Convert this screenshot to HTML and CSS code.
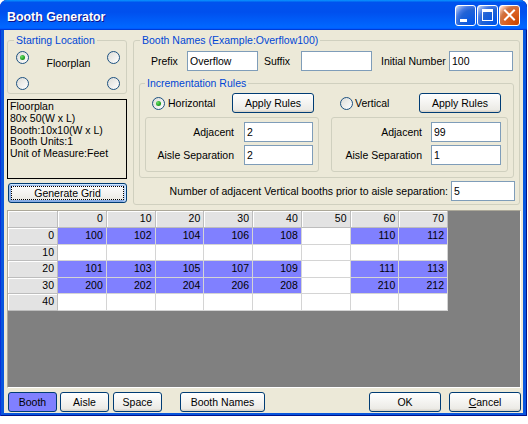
FILE: index.html
```html
<!DOCTYPE html>
<html>
<head>
<meta charset="utf-8">
<title>Booth Generator</title>
<link rel="stylesheet" href="styles.css">
</head>
<body>
<div class="window">
  <div class="titlebar">
    <span class="title">Booth Generator</span>
    <div class="tbtns">
      <span class="tbtn blue"><svg width="19" height="19" viewBox="0 0 19 19"><rect x="4" y="13" width="7" height="3" fill="#fff"/></svg></span>
      <span class="tbtn blue"><svg width="19" height="19" viewBox="0 0 19 19"><path d="M4 3h11v12H4z M5 6v8h9V6z" fill="#fff" fill-rule="evenodd"/></svg></span>
      <span class="tbtn red"><svg width="19" height="19" viewBox="0 0 19 19"><path d="M5 4.5l9 9M14 4.5l-9 9" stroke="#fff" stroke-width="2" stroke-linecap="square"/></svg></span>
    </div>
  </div>
  <div class="client">
    <div class="top">
      <div class="leftcol">
        <fieldset class="group start">
          <legend>Starting Location</legend>
          <div class="startgrid">
            <span class="radio checked"></span>
            <span class="fp">Floorplan</span>
            <span class="radio"></span>
            <span class="radio"></span>
            <span class="radio"></span>
          </div>
        </fieldset>
        <div class="info">Floorplan<br>80x 50(W x L)<br>Booth:10x10(W x L)<br>Booth Units:1<br>Unit of Measure:Feet</div>
        <button class="btn focus gen">Generate Grid</button>
      </div>
      <fieldset class="group names">
        <legend>Booth Names (Example:Overflow100)</legend>
        <div class="row1">
          <span class="lbl">Prefix</span>
          <div class="tb">Overflow</div>
          <span class="lbl suf">Suffix</span>
          <div class="tb"></div>
          <span class="lbl ini">Initial Number</span>
          <div class="tb">100</div>
        </div>
        <fieldset class="group inc">
          <legend>Incrementation Rules</legend>
          <div class="inccols">
            <div class="col cola">
              <div class="radrow">
                <span class="radio checked"></span>
                <span class="rlabel">Horizontal</span>
                <button class="btn apply">Apply Rules</button>
              </div>
              <div class="sub">
                <div class="frow"><span class="flabel">Adjacent</span><div class="tb">2</div></div>
                <div class="frow"><span class="flabel">Aisle Separation</span><div class="tb">2</div></div>
              </div>
            </div>
            <div class="col colb">
              <div class="radrow">
                <span class="radio"></span>
                <span class="rlabel">Vertical</span>
                <button class="btn apply">Apply Rules</button>
              </div>
              <div class="sub">
                <div class="frow"><span class="flabel">Adjacent</span><div class="tb">99</div></div>
                <div class="frow"><span class="flabel">Aisle Separation</span><div class="tb">1</div></div>
              </div>
            </div>
          </div>
        </fieldset>
        <div class="row3">
          <span class="ntext">Number of adjacent Vertical booths prior to aisle separation:</span>
          <div class="tb">5</div>
        </div>
      </fieldset>
    </div>
    <div class="gridarea">
      <div class="sheet">
        <div class="c h"></div><div class="c h">0</div><div class="c h">10</div><div class="c h">20</div><div class="c h">30</div><div class="c h">40</div><div class="c h">50</div><div class="c h">60</div><div class="c h">70</div>
        <div class="c h">0</div><div class="c b">100</div><div class="c b">102</div><div class="c b">104</div><div class="c b">106</div><div class="c b">108</div><div class="c"></div><div class="c b">110</div><div class="c b">112</div>
        <div class="c h">10</div><div class="c"></div><div class="c"></div><div class="c"></div><div class="c"></div><div class="c"></div><div class="c"></div><div class="c"></div><div class="c"></div>
        <div class="c h">20</div><div class="c b">101</div><div class="c b">103</div><div class="c b">105</div><div class="c b">107</div><div class="c b">109</div><div class="c"></div><div class="c b">111</div><div class="c b">113</div>
        <div class="c h">30</div><div class="c b">200</div><div class="c b">202</div><div class="c b">204</div><div class="c b">206</div><div class="c b">208</div><div class="c"></div><div class="c b">210</div><div class="c b">212</div>
        <div class="c h">40</div><div class="c"></div><div class="c"></div><div class="c"></div><div class="c"></div><div class="c"></div><div class="c"></div><div class="c"></div><div class="c"></div>
      </div>
    </div>
    <div class="bottombar">
      <button class="btn bb booth">Booth</button>
      <button class="btn bb aisle">Aisle</button>
      <button class="btn bb space">Space</button>
      <button class="btn names-btn">Booth Names</button>
      <button class="btn ok">OK</button>
      <button class="btn cancel"><span class="u">C</span>ancel</button>
    </div>
  </div>
</div>
</body>
</html>
```
FILE: styles.css
```css
* { box-sizing: border-box; }
body {
  margin: 0;
  background: #fff;
  font-family: "Liberation Sans", Arial, sans-serif;
  font-size: 10.5px;
  color: #000;
}
.window {
  width: 527px;
  height: 416px;
  background: #0855DD;
  border-radius: 7px 7px 0 0;
  display: flex;
  flex-direction: column;
  overflow: hidden;
  box-shadow: inset 1px 0 #0831D9, inset -1px 0 #00138C, inset 0 -1px #00138C;
}
.titlebar {
  height: 30px;
  flex: none;
  display: flex;
  align-items: center;
  padding: 0 7px 0 7px;
  background: linear-gradient(180deg, #0997ff, #0053ee 8%, #0050ee 40%, #0066ff 88%, #0066ff 93%, #005bff 95%, #003dd7 96%, #003dd7);
  border-radius: 7px 7px 0 0;
}
.title {
  color: #fff;
  font-weight: bold;
  font-size: 12.4px;
  padding-top: 3px;
  text-shadow: 1px 1px #0F1089;
}
.tbtns {
  margin-left: auto;
  display: flex;
  gap: 1px;
}
.tbtn {
  width: 21px;
  height: 21px;
  border: 1px solid #fff;
  border-radius: 3px;
  display: flex;
}
.tbtn.blue {
  background: radial-gradient(circle at 90% 90%, #0054e9 0%, #2263d5 55%, #4479e4 70%, #a3bbec 90%, #fff 100%);
}
.tbtn.red {
  background: radial-gradient(circle at 90% 90%, #cc4600 0%, #dc6527 55%, #cd7546 70%, #ffccb2 90%, #fff 100%);
}
.client {
  flex: 1;
  margin: 0 4px 4px;
  background: #ECE9D8;
  padding: 4px 2px 1px 3px;
  display: flex;
  flex-direction: column;
}
.top {
  display: flex;
  gap: 6px;
  height: 171px;
}
.leftcol {
  width: 120px;
  display: flex;
  flex-direction: column;
}
fieldset.group {
  margin: 0;
  padding: 0;
  border: 1px solid #D0D0BF;
  border-radius: 3px;
  min-width: 0;
}
fieldset.group > legend {
  padding: 0 2px;
  color: #0046D5;
  line-height: 13px;
  margin-left: 6px;
}
.start { height: 60px; }
.startgrid {
  display: grid;
  grid-template-columns: 13px 1fr 13px;
  grid-template-rows: 13px 13px;
  row-gap: 13px;
  padding: 4px 6px 0 8px;
}
.fp {
  grid-column: 2;
  grid-row: 1 / span 2;
  align-self: start;
  margin-top: 6px;
  line-height: 13px;
  text-align: center;
  padding-left: 1px;
}
.radio {
  width: 13px;
  height: 13px;
  border-radius: 50%;
  border: 1px solid #1C5180;
  background: linear-gradient(135deg, #DCDCD7, #fff);
  display: inline-flex;
  align-items: center;
  justify-content: center;
  flex: none;
}
.radio.checked::after {
  content: "";
  width: 5px;
  height: 5px;
  border-radius: 50%;
  background: radial-gradient(circle at 35% 35%, #6CE06C, #21A121 60%, #1A7E1A);
}
.info {
  margin-top: 5px;
  height: 80px;
  border: 1px solid #000;
  padding: 1px 0 0 2px;
  line-height: 11.75px;
  white-space: nowrap;
}
.btn {
  display: flex;
  align-items: center;
  justify-content: center;
  height: 20px;
  border: 1px solid #003C74;
  border-radius: 3px;
  background: linear-gradient(180deg, #fff, #ECEBE6 86%, #D6D0C5);
  font: inherit;
  color: #000;
  padding: 0;
  margin: 0;
  white-space: nowrap;
}
.btn.focus {
  box-shadow: inset -1px 1px #CEE7FF, inset 1px 2px #98B8EA, inset -2px 0 #BCD4F6, inset 1px -1px #89ADE4, inset 2px -2px #89ADE4;
  outline: 1px dotted #000;
  outline-offset: -4px;
}
.gen {
  margin-top: 4px;
  width: 119px;
  margin-left: 1px;
}
.names {
  width: 387px;
  height: 171px;
}
.row1 {
  display: grid;
  grid-template-columns: 36px 71px 43px 71px 77px 64px;
  align-items: center;
  padding-left: 17px;
  margin-top: 4px;
  height: 20px;
}
.lbl { white-space: nowrap; }
.lbl.suf { padding-left: 6px; }
.lbl.ini { padding-left: 9px; }
.tb {
  height: 20px;
  border: 1px solid #7F9DB9;
  background: #fff;
  padding: 0 2px;
  line-height: 18px;
  white-space: nowrap;
}
.inc {
  margin: 6px 0 0 5px !important;
  width: 375px;
  height: 101px;
}
fieldset.inc > legend { margin-left: 5px; }
.inccols {
  display: flex;
  padding-left: 5px;
}
.cola { width: 174px; }
.colb { width: 177px; margin-left: 12px; }
.radrow {
  display: flex;
  align-items: center;
  height: 20px;
  margin-top: 3px;
}
.cola .radrow .radio { margin-left: 7px; }
.colb .radrow .radio { margin-left: 9px; }
.cola .rlabel { margin-left: 3px; }
.colb .rlabel { margin-left: 2px; }
.apply {
  width: 82px;
  margin-left: auto;
}
.cola .apply { margin-right: 5px; }
.colb .apply { margin-right: 7px; }
.sub {
  margin-top: 4px;
  height: 55px;
  border: 1px solid #D0D0BF;
  border-radius: 3px;
  padding-top: 4px;
  display: flex;
  flex-direction: column;
  gap: 3px;
}
.cola .sub { padding-right: 5px; }
.colb .sub { padding-right: 6px; }
.frow {
  display: flex;
  justify-content: flex-end;
  align-items: center;
}
.cola .flabel { margin-right: 10px; }
.colb .flabel { margin-right: 9px; }
.cola .tb { width: 69px; }
.colb .tb { width: 70px; }
.row3 {
  display: flex;
  justify-content: flex-end;
  align-items: center;
  margin-top: 3px;
  padding-right: 4px;
}
.ntext { margin-right: 3px; white-space: nowrap; }
.row3 .tb { width: 64px; }
.gridarea {
  margin-top: 5px;
  height: 178px;
  background: #808080;
  border: 1px solid;
  border-color: #ACA899 #fff #fff #ACA899;
}
.sheet {
  display: grid;
  grid-template-columns: 50px repeat(8, 48.75px);
  grid-template-rows: 17px repeat(5, 16.6px);
  width: fit-content;
  background: #fff;
}
.c {
  border-right: 1px solid #D4D4D4;
  border-bottom: 1px solid #D4D4D4;
  text-align: right;
  padding-right: 3px;
  line-height: 15px;
  background: #fff;
}
.c.h {
  background: #E3E3E3;
  border-color: #BDBDBD;
  box-shadow: inset 1px 1px #fff;
}
.c.b { background: #8080FF; }
.bottombar {
  display: flex;
  margin-top: 4px;
  height: 20px;
}
.bb { width: 49px; }
.booth { margin-left: 1px; background: #8080FF; }
.aisle { margin-left: 3px; }
.space { margin-left: 4px; }
.names-btn { width: 85px; margin-left: 18px; }
.ok { width: 72px; margin-left: auto; }
.cancel { width: 72px; margin-left: 8px; }
.u { text-decoration: underline; }
```
